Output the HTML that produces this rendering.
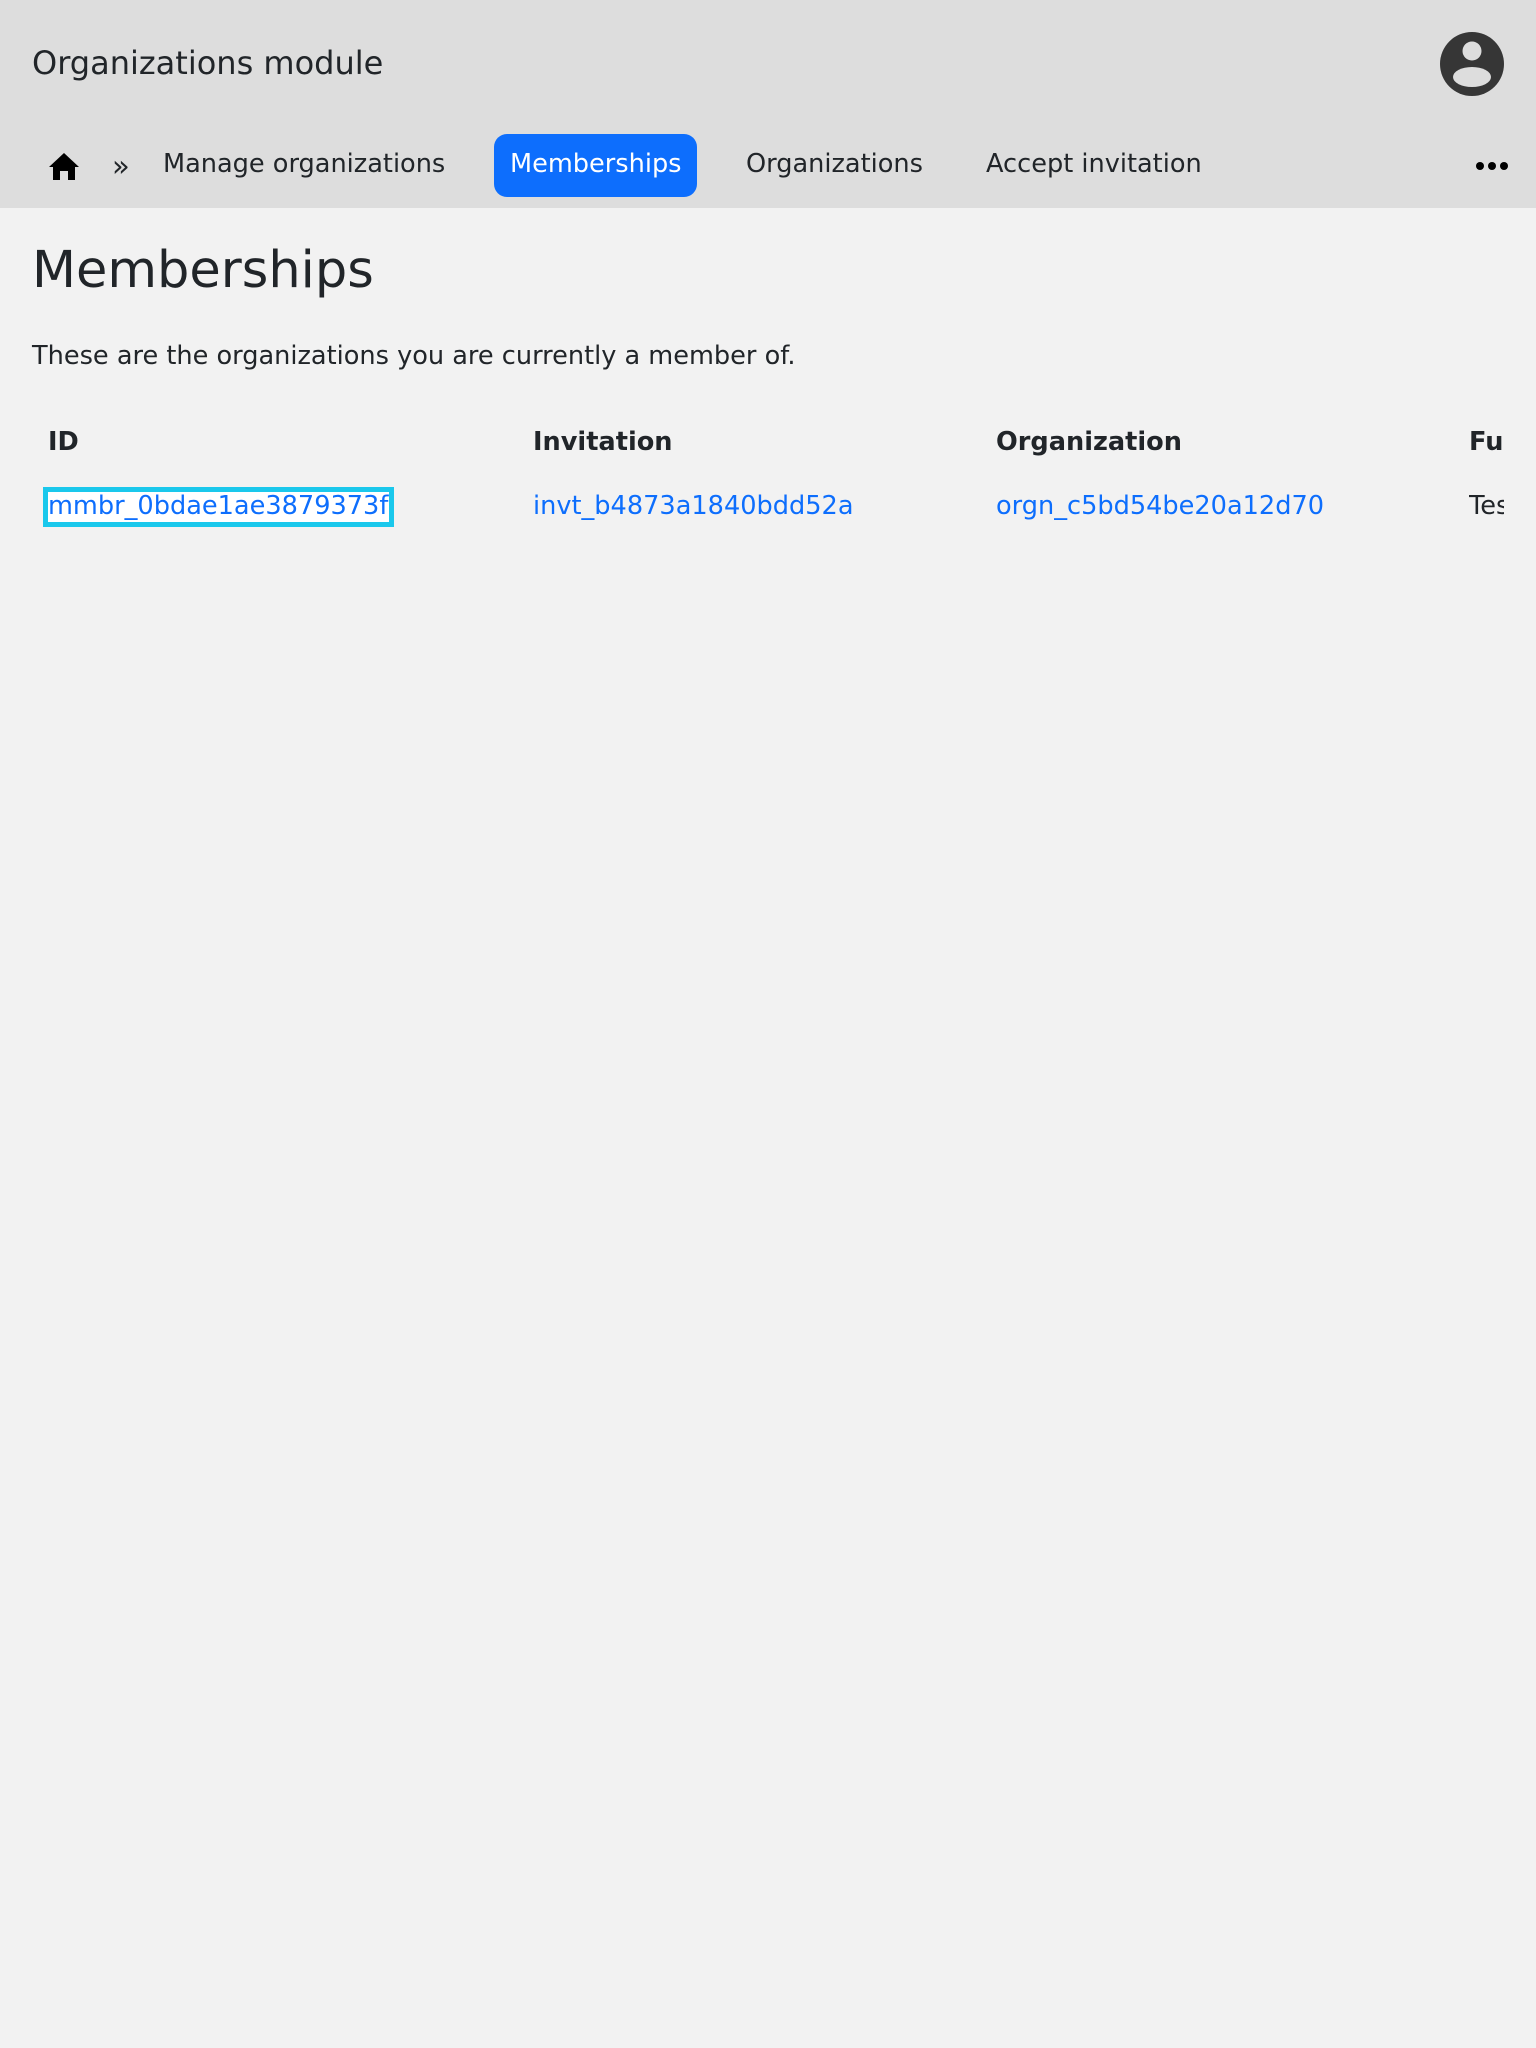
<!DOCTYPE html>
<html><head><meta charset="utf-8"><style>
*{margin:0;padding:0;box-sizing:border-box}
body{width:1536px;height:2048px;background:#f2f2f2;font-family:"DejaVu Sans","Liberation Sans",sans-serif;color:#212529;position:relative;overflow:hidden}
.hdr{position:absolute;left:0;top:0;width:1536px;height:208px;background:#dddddd}
.a{position:absolute;white-space:nowrap;line-height:1}
.link{color:#0d6efd}
</style></head><body>
<div class="hdr"></div>
<div class="a" style="left:32px;top:47px;font-size:32px">Organizations module</div>
<svg class="a" style="left:1440px;top:32px" width="64" height="64" viewBox="0 0 64 64">
<circle cx="32" cy="32" r="32" fill="#363636"/>
<circle cx="32" cy="19" r="9.5" fill="#dddddd"/>
<ellipse cx="32" cy="45" rx="19" ry="10" fill="#dddddd"/>
</svg>
<svg class="a" style="left:48px;top:150px" width="32" height="32" viewBox="0 0 32 32">
<path d="M16 3 L31 17 L27 17 L27 30 L20 30 L20 21 L12 21 L12 30 L5 30 L5 17 L1 17 Z" fill="#000"/>
</svg>
<div class="a" style="left:112px;top:152px;font-size:29px">»</div>
<div class="a" style="left:163px;top:152px;font-size:25.6px">Manage organizations</div>
<div class="a" style="left:494px;top:134px;width:203px;height:63px;background:#0d6efd;border-radius:13px"></div>
<div class="a" style="left:510px;top:152px;font-size:25.6px;color:#fff">Memberships</div>
<div class="a" style="left:746px;top:152px;font-size:25.6px">Organizations</div>
<div class="a" style="left:986px;top:152px;font-size:25.6px">Accept invitation</div>
<svg class="a" style="left:1474px;top:161px" width="36" height="10"><circle cx="6" cy="5" r="4"/><circle cx="18" cy="5" r="4"/><circle cx="30" cy="5" r="4"/></svg>
<div class="a" style="left:32px;top:245px;font-size:51px">Memberships</div>
<div class="a" style="left:32px;top:344px;font-size:25.6px">These are the organizations you are currently a member of.</div>
<div class="a" style="left:48px;top:430px;font-size:25.6px;font-weight:bold">ID</div>
<div class="a" style="left:533px;top:430px;font-size:25.6px;font-weight:bold">Invitation</div>
<div class="a" style="left:996px;top:430px;font-size:25.6px;font-weight:bold">Organization</div>
<div class="a" style="left:1469px;top:430px;width:35px;overflow:hidden;font-size:25.6px;font-weight:bold">Full</div>
<div class="a" style="left:43px;top:487px;width:351px;height:40px;border:5px solid #1ac8ec;background:#fff"></div>
<div class="a link" style="left:48px;top:494px;font-size:25.6px;width:341px;overflow:hidden">mmbr_0bdae1ae3879373f</div>
<div class="a link" style="left:533px;top:494px;font-size:25.6px">invt_b4873a1840bdd52a</div>
<div class="a link" style="left:996px;top:494px;font-size:25.6px">orgn_c5bd54be20a12d70</div>
<div class="a" style="left:1469px;top:494px;width:35px;overflow:hidden;font-size:25.6px">Test</div>
</body></html>
